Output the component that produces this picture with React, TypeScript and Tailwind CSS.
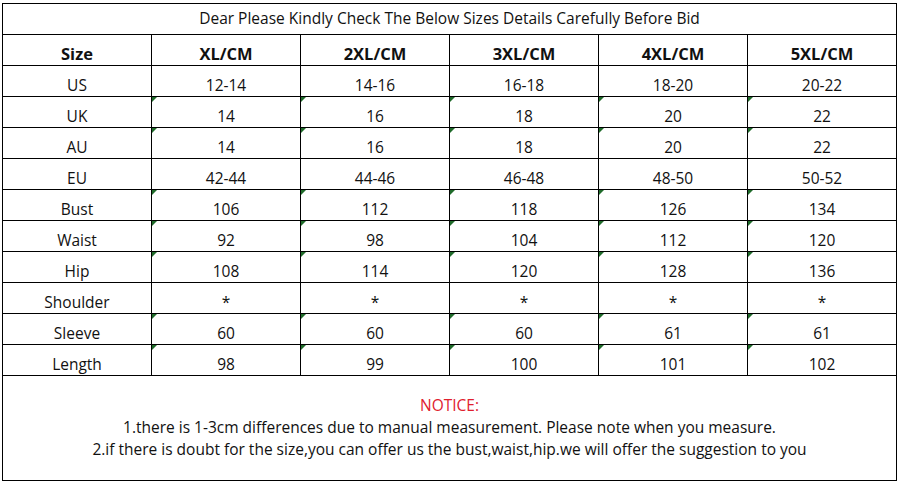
import React from "react";

const cols = ["XL/CM", "2XL/CM", "3XL/CM", "4XL/CM", "5XL/CM"];

type Row = { label: string; vals: string[]; mark: boolean };

const rows: Row[] = [
  { label: "US", vals: ["12-14", "14-16", "16-18", "18-20", "20-22"], mark: false },
  { label: "UK", vals: ["14", "16", "18", "20", "22"], mark: true },
  { label: "AU", vals: ["14", "16", "18", "20", "22"], mark: true },
  { label: "EU", vals: ["42-44", "44-46", "46-48", "48-50", "50-52"], mark: false },
  { label: "Bust", vals: ["106", "112", "118", "126", "134"], mark: true },
  { label: "Waist", vals: ["92", "98", "104", "112", "120"], mark: true },
  { label: "Hip", vals: ["108", "114", "120", "128", "136"], mark: true },
  { label: "Shoulder", vals: ["*", "*", "*", "*", "*"], mark: false },
  { label: "Sleeve", vals: ["60", "60", "60", "61", "61"], mark: true },
  { label: "Length", vals: ["98", "99", "100", "101", "102"], mark: true },
];

function Cell({ children, mark, bold }: { children: React.ReactNode; mark?: boolean; bold?: boolean }) {
  return (
    <div
      className={`relative h-[31px] border-r border-b border-black flex items-end justify-center pb-[1px] leading-[20px] ${
        bold ? "font-bold text-[16.5px]" : "text-[15.5px]"
      }`}
    >
      {mark && (
        <span className="absolute left-0 top-0 w-0 h-0 border-t-[5px] border-r-[5px] border-t-[#1f6b2a] border-r-transparent" />
      )}
      {children}
    </div>
  );
}

export default function App() {
  return (
    <div
      className="w-[901px] h-[485px] bg-white pt-[3px] pl-[2px] text-[#111]"
      style={{ fontFamily: '"Open Sans", "Noto Sans", sans-serif' }}
    >
      <div className="w-[895px] border-l border-t border-black">
        <div className="h-[31px] border-r border-b border-black flex items-center justify-center text-[15.5px]">
          Dear Please Kindly Check The Below Sizes Details Carefully Before Bid
        </div>
        <div className="grid grid-cols-[repeat(6,149px)]">
          <Cell bold>Size</Cell>
          {cols.map((c) => (
            <Cell key={c} bold>
              {c}
            </Cell>
          ))}
          {rows.map((r) => (
            <React.Fragment key={r.label}>
              <Cell>{r.label}</Cell>
              {r.vals.map((v, i) => (
                <Cell key={i} mark={r.mark}>
                  {v}
                </Cell>
              ))}
            </React.Fragment>
          ))}
        </div>
        <div className="h-[105px] border-r border-b border-black flex flex-col items-center justify-center text-[15.5px] leading-[22px] pb-[2px]">
          <div className="text-[#e0202e]">NOTICE:</div>
          <div>1.there is 1-3cm differences due to manual measurement. Please note when you measure.</div>
          <div>2.if there is doubt for the size,you can offer us the bust,waist,hip.we will offer the suggestion to you</div>
        </div>
      </div>
    </div>
  );
}
